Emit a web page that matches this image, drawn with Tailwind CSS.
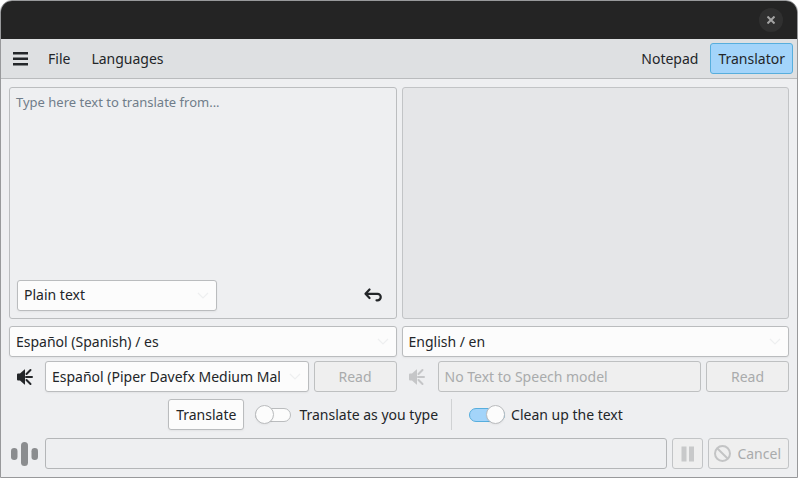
<!doctype html>
<html lang="en">

<head>
  <title>Translator</title>
  <meta charset="utf-8" />
  <meta name="viewport" content="width=device-width, initial-scale=1" />
  <script src="https://cdn.jsdelivr.net/npm/@tailwindcss/browser@4"></script>
</head>

<body class="bg-white font-['Noto_Sans',sans-serif] text-[14px] leading-5 text-[#232629]">
  <div class="flex flex-col h-screen bg-[#eeeff1] border border-[#98999b] rounded-t-xl overflow-hidden">
    <header class="flex items-center justify-end h-[38px] shrink-0 bg-[#242424] px-[14px]">
      <button class="grid place-items-center size-6 rounded-full bg-[#303030]" type="button" aria-label="Close">
        <svg class="size-2" viewBox="0 0 8 8" fill="none" stroke="#a3a3a3" stroke-width="2">
          <path d="M0.5 0.5L7.5 7.5M7.5 0.5L0.5 7.5" />
        </svg>
      </button>
    </header>

    <nav class="flex items-center h-10 shrink-0 bg-[#dee0e2] border-b border-[#b9bbbd] px-1">
      <button class="grid place-items-center w-8 h-8" type="button" aria-label="Menu">
        <svg class="w-4 h-4" viewBox="0 0 16 16" fill="#232629">
          <path d="M0 1h15v2.500H0zM0 6.500h15v2.500H0zM0 12h15v2.500H0z" />
        </svg>
      </button>
      <button class="h-8 px-[11px]" type="button">File</button>
      <button class="h-8 px-[10px]" type="button">Languages</button>
      <button class="h-8 px-[6px] ml-auto mr-[6px]" type="button">Notepad</button>
      <button class="h-[31px] px-[7px] rounded-[3px] border border-[#57aedd] bg-[#a3d4fa]" type="button">Translator</button>
    </nav>

    <main class="flex flex-col flex-1 min-h-0 p-2">
      <div class="grid grid-cols-2 gap-[5px] flex-1 min-h-0">
        <div class="flex flex-col rounded-[3px] border border-[#bbbdbf]">
          <textarea class="flex-1 min-h-0 resize-none px-[6px] py-1 text-[13px] placeholder-[#707d8a] outline-none"
            aria-label="Source text" placeholder="Type here text to translate from..."></textarea>
          <div class="flex items-center justify-between p-[7px]">
            <div class="relative w-[200px]">
              <select class="appearance-none w-full h-[31px] pl-[6px] pr-6 rounded-[3px] border border-[#babcbe] bg-[#fcfcfc] shadow-xs" aria-label="Text format">
                <option>Plain text</option>
              </select>
              <svg class="absolute right-2 top-3 w-3 h-2 pointer-events-none" viewBox="0 0 12 8" fill="none" stroke="#eeeff0" stroke-width="1.2">
                <path d="M1 1l5 5 5-5" />
              </svg>
            </div>
            <button class="grid place-items-center w-8 h-8" type="button" aria-label="Undo">
              <svg class="w-[18px] h-[14px]" viewBox="0 0 18 14" fill="none" stroke="#232629" stroke-width="2.2" stroke-linecap="round" stroke-linejoin="round">
                <path d="M5.500 1.500L1.500 5.800L5.500 10M1.500 5.800H13.500a3.200 3.200 0 0 1 0 6.500H12.500" />
              </svg>
            </button>
          </div>
        </div>
        <textarea class="resize-none px-[6px] py-1 text-[13px] rounded-[3px] border border-[#c2c4c6] bg-[#e5e6e8] outline-none"
          aria-label="Translated text" readonly></textarea>
      </div>

      <div class="grid grid-cols-2 gap-x-[5px] gap-y-1 mt-[7px]">
        <div class="relative">
          <select class="appearance-none w-full h-[31px] pl-[6px] pr-6 rounded-[3px] border border-[#babcbe] bg-[#fcfcfc] shadow-xs" aria-label="Source language">
            <option>Español (Spanish) / es</option>
          </select>
          <svg class="absolute right-2 top-3 w-3 h-2 pointer-events-none" viewBox="0 0 12 8" fill="none" stroke="#eeeff0" stroke-width="1.2">
            <path d="M1 1l5 5 5-5" />
          </svg>
        </div>
        <div class="relative">
          <select class="appearance-none w-full h-[31px] pl-[6px] pr-6 rounded-[3px] border border-[#babcbe] bg-[#fcfcfc] shadow-xs" aria-label="Target language">
            <option>English / en</option>
          </select>
          <svg class="absolute right-2 top-3 w-3 h-2 pointer-events-none" viewBox="0 0 12 8" fill="none" stroke="#eeeff0" stroke-width="1.2">
            <path d="M1 1l5 5 5-5" />
          </svg>
        </div>

        <div class="flex items-center gap-[5px]">
          <div class="grid place-items-center w-[31px] shrink-0">
            <svg class="w-[18px] h-[18px]" viewBox="0 0 18 18" fill="none" stroke="#232629" stroke-width="2" stroke-linecap="round">
              <path d="M1 6.500Q1 5.500 2 5.500H4L8.500 1.500Q9 1 9 2V16Q9 17 8.500 16.500L4 12.500H2Q1 12.500 1 11.500z" fill="#232629" stroke="none" />
              <path d="M10 9H16M10.500 6L14.500 2M10.500 12L14.500 16" />
            </svg>
          </div>
          <div class="relative flex-1 min-w-0">
            <select class="appearance-none w-full h-[31px] pl-[6px] pr-7 rounded-[3px] border border-[#babcbe] bg-[#fcfcfc] shadow-xs" aria-label="Source voice">
              <option>Español (Piper Davefx Medium Male)</option>
            </select>
            <svg class="absolute right-2 top-3 w-3 h-2 pointer-events-none" viewBox="0 0 12 8" fill="none" stroke="#eeeff0" stroke-width="1.2">
              <path d="M1 1l5 5 5-5" />
            </svg>
          </div>
          <button class="w-[83px] h-[31px] rounded-[3px] border border-[#bec0c1] bg-[#efefef] text-[#a9abac]" type="button" disabled>Read</button>
        </div>
        <div class="flex items-center gap-[5px]">
          <div class="grid place-items-center w-[31px] shrink-0">
            <svg class="w-[18px] h-[18px]" viewBox="0 0 18 18" fill="none" stroke="#c5c6c8" stroke-width="2" stroke-linecap="round">
              <path d="M1 6.500Q1 5.500 2 5.500H4L8.500 1.500Q9 1 9 2V16Q9 17 8.500 16.500L4 12.500H2Q1 12.500 1 11.500z" fill="#c5c6c8" stroke="none" />
              <path d="M10 9H16M10.500 6L14.500 2M10.500 12L14.500 16" />
            </svg>
          </div>
          <select class="appearance-none flex-1 min-w-0 h-[31px] px-[6px] rounded-[3px] border border-[#bec0c1] bg-[#efefef] text-[#a9abac] opacity-100" aria-label="Target voice" disabled>
            <option>No Text to Speech model</option>
          </select>
          <button class="w-[83px] h-[31px] rounded-[3px] border border-[#bec0c1] bg-[#efefef] text-[#a9abac]" type="button" disabled>Read</button>
        </div>
      </div>

      <div class="flex items-center justify-center mt-[7px] pr-[7px]">
        <button class="h-[31px] px-[7px] rounded-[3px] border border-[#babcbe] bg-[#fcfcfc] shadow-xs" type="button">Translate</button>
        <label class="flex items-center gap-2 ml-[11px]">
          <input class="relative appearance-none w-9 h-[14px] rounded-full border border-[#babcbe] bg-[#fcfcfc] checked:border-[#57aedd] checked:bg-[#a3d4fa] before:absolute before:-left-px before:-top-1 before:size-[19px] before:rounded-full before:border before:border-[#babcbe] before:bg-[#fcfcfc] before:shadow-xs checked:before:left-auto checked:before:-right-px"
            type="checkbox" />
          Translate as you type
        </label>
        <div class="w-px h-[31px] ml-[13px] mr-[17px] bg-[#d0d2d4]"></div>
        <label class="flex items-center gap-[6px]">
          <input class="relative appearance-none w-9 h-[14px] rounded-full border border-[#babcbe] bg-[#fcfcfc] checked:border-[#57aedd] checked:bg-[#a3d4fa] before:absolute before:-left-px before:-top-1 before:size-[19px] before:rounded-full before:border before:border-[#babcbe] before:bg-[#fcfcfc] before:shadow-xs checked:before:left-auto checked:before:-right-px"
            type="checkbox" checked />
          Clean up the text
        </label>
      </div>

      <div class="flex items-center gap-[5px] mt-2">
        <div class="grid place-items-center w-[31px] shrink-0">
          <svg class="w-7 h-6" viewBox="0 0 28 24" fill="#8b8d8f">
            <rect x="0" y="6" width="6.500" height="12" rx="3.200" />
            <rect x="10" y="0" width="7" height="24" rx="3.500" />
            <rect x="20.500" y="6" width="6.500" height="12" rx="3.200" />
          </svg>
        </div>
        <input class="flex-1 min-w-0 h-[31px] px-[6px] rounded-[3px] border border-[#b4b6b8] bg-[#eeeff1]" type="text" aria-label="Status" readonly />
        <button class="grid place-items-center w-[31px] h-[31px] rounded-[3px] border border-[#c2c4c6] bg-[#efefef]" type="button" aria-label="Pause" disabled>
          <svg class="w-[14px] h-4" viewBox="0 0 14 16" fill="#c8c9ca">
            <path d="M0.500 0.500h5v15h-5zM8 0.500h5v15h-5z" />
          </svg>
        </button>
        <button class="flex items-center gap-[6px] h-[31px] pl-[5px] pr-[7px] rounded-[3px] border border-[#c2c4c6] bg-[#efefef] text-[#a9abac]" type="button" disabled>
          <svg class="size-[17px]" viewBox="0 0 17 17" fill="none" stroke="#c3c4c5" stroke-width="2">
            <circle cx="8.500" cy="8.500" r="7.500" />
            <path d="M3.200 3.200L13.800 13.800" />
          </svg>
          Cancel
        </button>
      </div>
    </main>
  </div>
</body>

</html>
